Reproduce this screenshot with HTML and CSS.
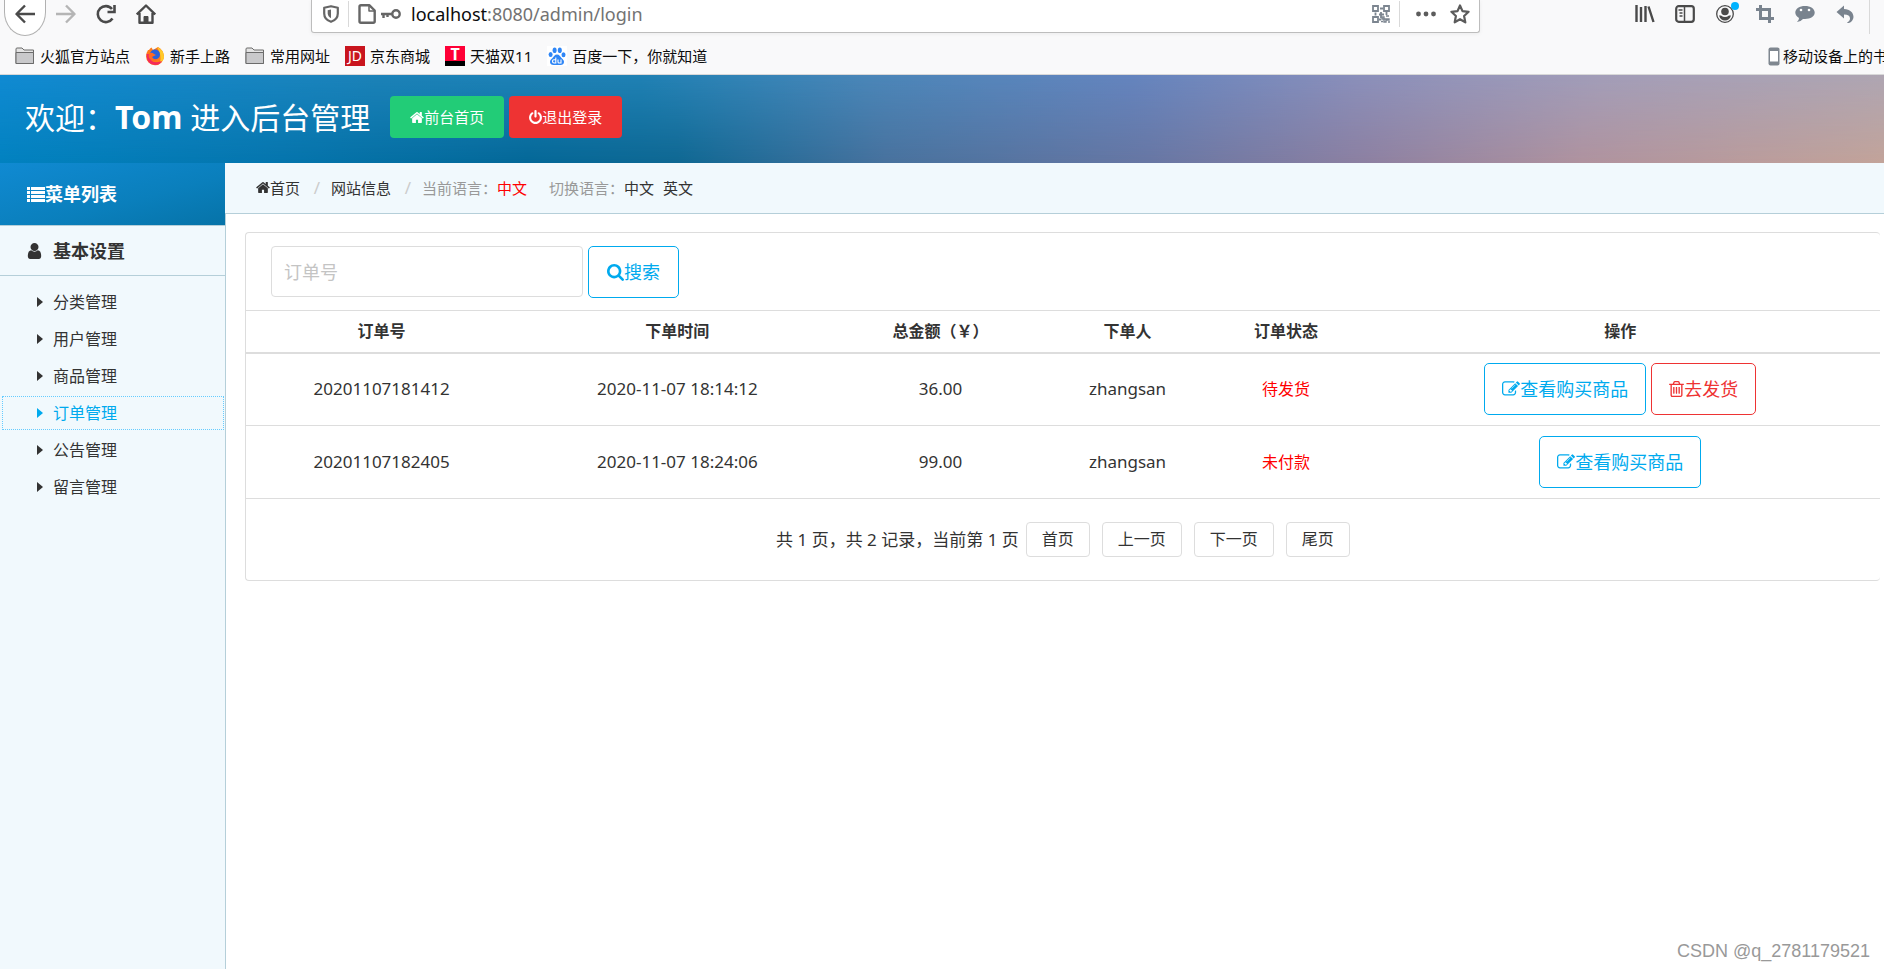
FILE: index.html
```html
<!DOCTYPE html>
<html lang="zh-CN">
<head>
<meta charset="utf-8">
<title>后台管理</title>
<link rel="stylesheet" href="styles.css">
</head>
<body>
<svg class="defs" aria-hidden="true">
  <symbol id="home" viewBox="64 128 1664 1536"><path d="M1472 992v480q0 26-19 45t-45 19h-384v-384h-256v384h-384q-26 0-45-19t-19-45v-480q0-1 .5-3t.5-3l575-474 575 474q1 2 1 6zm223-69l-62 74q-8 9-21 11h-3q-13 0-21-7l-692-577-692 577q-12 8-24 7-13-2-21-11l-62-74q-8-10-7-23.500t11-21.500l719-599q32-26 76-26t76 26l244 204v-195q0-14 9-23t23-9h192q14 0 23 9t9 23v408l219 182q10 8 11 21.500t-7 23.500z"/></symbol>
  <symbol id="power" viewBox="128 0 1536 1664"><path d="M1664 896q0 156-61 298t-164 245-245 164-298 61-298-61-245-164-164-245-61-298q0-182 80.500-343t226.500-270q43-32 95.500-25t83.500 50q32 42 24.500 94.500t-49.500 84.500q-98 74-151.500 181t-53.500 228q0 104 40.500 198.500t109.500 163.500 163.500 109.500 198.500 40.500 198.500-40.500 163.500-109.500 109.500-163.500 40.500-198.500q0-121-53.500-228t-151.500-181q-42-32-49.500-84.500t24.500-94.500q31-43 84-50t95 25q146 109 226.500 270t80.500 343zm-640-768v640q0 52-38 90t-90 38-90-38-38-90v-640q0-52 38-90t90-38 90 38 38 90z"/></symbol>
  <symbol id="user" viewBox="256 128 1280 1536"><path d="M1536 1399q0 109-62.500 187t-150.500 78h-854q-88 0-150.500-78t-62.500-187q0-85 8.500-160.500t31.500-152 58.500-131 94-89 134.500-34.500q131 128 313 128t313-128q76 0 134.500 34.500t94 89 58.500 131 31.500 152 8.500 160.500zm-256-887q0 159-112.500 271.500t-271.500 112.500-271.500-112.500-112.500-271.500 112.500-271.500 271.500-112.500 271.500 112.500 112.500 271.500z"/></symbol>
  <symbol id="search" viewBox="64 128 1664 1664"><path d="M1216 832q0-185-131.500-316.500t-316.500-131.500-316.500 131.500-131.500 316.500 131.500 316.500 316.500 131.500 316.500-131.500 131.500-316.500zm512 832q0 52-38 90t-90 38q-54 0-90-38l-343-342q-179 124-399 124-143 0-273.500-55.500t-225-150-150-225-55.500-273.500 55.500-273.500 150-225 225-150 273.500-55.500 273.500 55.500 225 150 150 225 55.500 273.500q0 220-124 399l343 343q37 37 37 90z"/></symbol>
  <symbol id="edit" viewBox="0 128 1792 1536"><path d="M888 1184l116-116-152-152-116 116v56h96v96h56zm440-720q-16-16-33 1l-350 350q-17 17-1 33t33-1l350-350q17-17 1-33zm80 594v190q0 119-84.500 203.500t-203.500 84.500h-832q-119 0-203.500-84.500t-84.500-203.500v-832q0-119 84.500-203.500t203.500-84.500h832q63 0 117 25 15 7 18 23 3 17-9 29l-49 49q-14 14-32 8-23-6-45-6h-832q-66 0-113 47t-47 113v832q0 66 47 113t113 47h832q66 0 113-47t47-113v-126q0-13 9-22l64-64q15-15 35-7t20 29zm-96-738l288 288-672 672h-288v-288zm444 132l-92 92-288-288 92-92q28-28 68-28t68 28l152 152q28 28 28 68t-28 68z"/></symbol>
  <symbol id="trash" viewBox="192 128 1408 1536"><path d="M704 736v576q0 14-9 23t-23 9h-64q-14 0-23-9t-9-23v-576q0-14 9-23t23-9h64q14 0 23 9t9 23zm256 0v576q0 14-9 23t-23 9h-64q-14 0-23-9t-9-23v-576q0-14 9-23t23-9h64q14 0 23 9t9 23zm256 0v576q0 14-9 23t-23 9h-64q-14 0-23-9t-9-23v-576q0-14 9-23t23-9h64q14 0 23 9t9 23zm128 724v-948h-896v948q0 22 7 40.500t14.500 27 10.500 8.500h832q3 0 10.500-8.500t14.500-27 7-40.500zm-672-1076h448l-48-117q-7-9-17-11h-317q-10 2-17 11zm928 32v64q0 14-9 23t-23 9h-96v948q0 83-47 143.500t-113 60.500h-832q-66 0-113-58.500t-47-141.500v-952h-96q-14 0-23-9t-9-23v-64q0-14 9-23t23-9h309l70-167q15-37 54-63t79-26h320q40 0 79 26t54 63l70 167h309q14 0 23 9t9 23z"/></symbol>
  <symbol id="caret" viewBox="0 0 6 10"><path d="M0 0l6 5-6 5z"/></symbol>
  <symbol id="folder" viewBox="0 0 20 20"><path d="M1 3q0-1 1-1h5l2 2h9.500v13.500H1z" fill="#e4e4e4" stroke="#6b6b6b"/><path d="M1 6.500h17.500v11H1z" fill="#c9c9cb" stroke="#6b6b6b"/></symbol>
</svg>

<div class="browser">
  <div class="toolbar">
    <div class="nav">
      <button class="tool back" aria-label="后退"><svg width="20" height="20" viewBox="0 0 20 20" fill="none" stroke="#4a4a4a" stroke-width="2.400"><path d="M20 10H2M10 1.500L1.500 10l8.500 8.500" stroke-linejoin="round"/></svg></button>
      <button class="tool" aria-label="前进"><svg width="20" height="20" viewBox="0 0 20 20" fill="none" stroke="#b5b5b5" stroke-width="2.400"><path d="M0 10h18M10 1.500l8.500 8.500-8.500 8.500" stroke-linejoin="round"/></svg></button>
      <button class="tool" aria-label="刷新"><svg width="20" height="20" viewBox="0 0 20 20" fill="none" stroke="#4a4a4a" stroke-width="2.600"><path d="M16.500 14.500A8 8 0 1 1 16 5"/><path d="M18.500 1v7h-7" /></svg></button>
      <button class="tool" aria-label="主页"><svg width="20" height="20" viewBox="0 0 20 20" fill="none" stroke="#4a4a4a" stroke-width="2.400"><path d="M.8 10.500L10 1.500l9.200 9M3.500 9v9.700h13V9" stroke-linejoin="round"/><path d="M8 19v-6.500h4V19" fill="#4a4a4a" stroke-width="1"/></svg></button>
    </div>
    <div class="address">
      <svg width="16" height="18" viewBox="0 0 16 18"><path d="M8 1.200l6.800 1.600v5.700c0 4-3 7-6.800 8.300-3.800-1.300-6.800-4.300-6.800-8.300V2.800z" fill="none" stroke="#666" stroke-width="2.200" stroke-linejoin="round"/><path d="M8 4.500v8.800C6 12.200 4.700 10.500 4.700 8.300V5.200z" fill="#666"/></svg>
      <span class="rule"></span>
      <svg class="page" width="18" height="20" viewBox="0 0 18 20" fill="none" stroke="#666" stroke-width="2.400" stroke-linejoin="round"><path d="M3 1.300h8.500L16.700 6.500v10.700q0 1.500-1.500 1.500H3q-1.500 0-1.500-1.500V2.800Q1.500 1.300 3 1.300z"/><path d="M11 2v5h5.500" stroke-width="1.500"/></svg>
      <svg class="key" width="20" height="12" viewBox="0 0 20 12" fill="none" stroke="#666" stroke-width="2.400"><circle cx="15" cy="6" r="3.700"/><path d="M0 6h11M2.500 6v4M6.500 6v3"/></svg>
      <span class="url"><b>localhost</b>:8080/admin/login</span>
      <svg class="qr" width="18" height="18" viewBox="0 0 18 18" fill="none" stroke="#7c8590" stroke-width="1.800"><path d="M1 1h5v5H1zM12 1h5v5h-5zM1 12h5v5H1zM8 3.500h3M3.500 7.500v3M14.500 7v3M7 14.500h2M9 7v6M7 9.500h5"/><path d="M10 12h2v2h-2zM12 14h2v3h-2zM14 11h3M15 14h2v1h-2zM9 16.500h2M16 17h2" stroke-width="1.400"/></svg>
      <span class="rule"></span>
      <button class="tool dots" aria-label="更多"><svg width="20" height="6" viewBox="0 0 20 6" fill="#5c5c5c"><circle cx="2.500" cy="3" r="2.400"/><circle cx="10" cy="3" r="2.400"/><circle cx="17.500" cy="3" r="2.400"/></svg></button>
      <button class="tool star" aria-label="收藏"><svg width="20" height="20" viewBox="0 0 20 20" fill="none" stroke="#5c5c5c" stroke-width="2.200" stroke-linejoin="round"><path d="M10 1.500l2.500 5.600 6.100.7-4.500 4.200 1.200 6.300L10 15.200l-5.300 3.100L5.900 12 1.400 7.800l6.100-.7z"/></svg></button>
    </div>
    <div class="extras">
      <button class="tool" aria-label="书库"><svg width="20" height="20" viewBox="0 0 20 20" stroke="#4a4a4a" stroke-width="2.400" fill="none"><path d="M1.500 1v17M6 3v15M10.500 2v16M13.500 2.500L18.500 18"/></svg></button>
      <button class="tool" aria-label="侧栏"><svg width="20" height="20" viewBox="0 0 20 20" fill="none" stroke="#4a4a4a" stroke-width="2.200"><rect x="1.200" y="2.200" width="17.600" height="15.600" rx="2.500"/><path d="M9.500 2v16" stroke-width="1.500"/><path d="M3.500 6h4M4.500 9h3M4.500 12h3" stroke-width="1.300"/></svg></button>
      <button class="tool" aria-label="账户"><svg width="20" height="20" viewBox="0 0 20 20"><circle cx="10" cy="10" r="8.300" fill="none" stroke="#4a4a4a" stroke-width="1.300"/><circle cx="10" cy="7.500" r="3.800" fill="#4a4a4a"/><path d="M4 11.500h2q4 3 8 0h2q-1.500 5-6 5t-6-5z" fill="#4a4a4a"/></svg><span class="dot"></span></button>
      <button class="tool" aria-label="截图"><svg width="20" height="20" viewBox="0 0 20 20" fill="none" stroke="#79838e" stroke-width="3"><path d="M1 5.500h13.500V19M5.500 1v13.500H19"/></svg></button>
      <button class="tool" aria-label="聊天"><svg width="20" height="20" viewBox="0 0 20 20"><path d="M10 2c5.500 0 9.700 2.600 9.700 6.600S15.500 15 10 15q-1 0-2 0-2.500 3-6 3 2-1.500 2-4Q.3 12 .3 8.600C.3 4.600 4.500 2 10 2z" fill="#79838e"/><circle cx="6" cy="6" r="1.300" fill="#fff"/><circle cx="14" cy="6" r="1.300" fill="#fff"/></svg></button>
      <button class="tool" aria-label="撤销"><svg width="20" height="20" viewBox="0 0 20 20" fill="#79838e"><path d="M1.500 8L9 1.500V5c6 .3 9.500 3.500 9.500 8 0 2.500-2 5-4 5.800q-2 .5-2.500 0c2-1.300 3-2.500 3-4.300 0-2.500-2-4-6-4v4z"/></svg></button>
      <span class="rule"></span>
    </div>
  </div>
  <nav class="bookmarks">
    <a href="#"><svg width="20" height="20"><use href="#folder"/></svg>火狐官方站点</a>
    <a href="#"><svg width="20" height="20" viewBox="0 0 20 20"><path d="M4 4q1-2 2.500-2.500L8 4l5-3q5 2.500 6 9a9 9 0 0 1-18 .5Q1 7 3 4z" fill="#ff7a1a"/><path d="M12 1q7 3 7 9.500 0 4-4 6.500 2-8-3-16z" fill="#ffc928"/><path d="M1.500 8q0 11 8.500 11 5 0 7-4-8 3-11-1L5 8z" fill="#f42a5c"/><circle cx="10" cy="8.500" r="5" fill="#2b62d9"/><path d="M4 7.500q3-1.500 5 .5l2 1-4 2q2 3.500 6 2-4 4-8 0-2-2-1-5.500z" fill="#ff6a22"/></svg>新手上路</a>
    <a href="#"><svg width="20" height="20"><use href="#folder"/></svg>常用网址</a>
    <a href="#"><span class="site jd">JD</span>京东商城</a>
    <a href="#"><span class="site tmall">T</span>天猫双11</a>
    <a href="#"><svg class="white" width="20" height="20" viewBox="0 0 20 20" fill="#2f86f6"><ellipse cx="3.600" cy="8.500" rx="2" ry="2.600"/><ellipse cx="7.600" cy="4.300" rx="2" ry="2.800"/><ellipse cx="12.800" cy="4.300" rx="2" ry="2.800"/><ellipse cx="16.500" cy="8.800" rx="2" ry="2.500"/><path d="M10 8.500c2.500 0 3 2 4.500 3.500s2.500 2.300 2.500 4c0 2-1.500 3-3.500 3h-7C4.500 19 3 18 3 16s1-2.500 2.500-4S7.500 8.500 10 8.500z"/><path d="M8.800 11.500V17H7q-1.500 0-1.500-1.700T7 13.700h1.800M11 13.500v2.500q0 1 1 1h2v-3.500" fill="none" stroke="#fff" stroke-width="1.100"/></svg>百度一下，你就知道</a>
    <a class="mobile" href="#"><svg width="12" height="19" viewBox="0 0 12 19"><rect x=".5" y=".5" width="11" height="18" rx="2" fill="#7f8790"/><rect x="2" y="4" width="8" height="10.500" fill="#fff"/></svg>移动设备上的书</a>
  </nav>
</div>

<header class="banner">
  <h1 class="welcome">欢迎：<strong>Tom</strong> 进入后台管理</h1>
  <a class="pill green" href="#"><svg width="14" height="13"><use href="#home"/></svg>前台首页</a>
  <a class="pill red" href="#"><svg width="13" height="14"><use href="#power"/></svg>退出登录</a>
</header>

<div class="layout">
  <aside class="sidebar">
    <h2 class="menu-title"><svg width="18" height="15" viewBox="0 0 18 15" fill="#fff"><path d="M0 0h3v3H0zM0 4h3v3H0zM0 8h3v3H0zM0 12h3v3H0zM4 0h14v3H4zM4 4h14v3H4zM4 8h14v3H4zM4 12h14v3H4z"/></svg>菜单列表</h2>
    <h3 class="group"><svg width="15" height="16"><use href="#user"/></svg>基本设置</h3>
    <ul class="menu">
      <li><a href="#"><svg width="6" height="10"><use href="#caret"/></svg>分类管理</a></li>
      <li><a href="#"><svg width="6" height="10"><use href="#caret"/></svg>用户管理</a></li>
      <li><a href="#"><svg width="6" height="10"><use href="#caret"/></svg>商品管理</a></li>
      <li><a class="active" href="#"><svg width="6" height="10"><use href="#caret"/></svg>订单管理</a></li>
      <li><a href="#"><svg width="6" height="10"><use href="#caret"/></svg>公告管理</a></li>
      <li><a href="#"><svg width="6" height="10"><use href="#caret"/></svg>留言管理</a></li>
    </ul>
  </aside>

  <main class="main">
    <nav class="crumbs">
      <a href="#"><svg width="14" height="13"><use href="#home"/></svg>首页</a>
      <span class="slash">/</span>
      <a href="#">网站信息</a>
      <span class="slash">/</span>
      <span>当前语言：<em>中文</em></span>
      <span class="switch">切换语言：<a href="#">中文</a></span>
      <a class="lang" href="#">英文</a>
    </nav>
    <div class="content">
      <section class="panel">
        <form class="search">
          <input type="text" placeholder="订单号" aria-label="订单号">
          <button class="btn" type="button"><svg width="17" height="17"><use href="#search"/></svg>搜索</button>
        </form>
        <table class="orders">
          <colgroup><col class="c1"><col class="c2"><col class="c3"><col class="c4"><col class="c5"><col></colgroup>
          <thead>
            <tr><th>订单号</th><th>下单时间</th><th>总金额（￥）</th><th>下单人</th><th>订单状态</th><th>操作</th></tr>
          </thead>
          <tbody>
            <tr>
              <td>20201107181412</td><td>2020-11-07 18:14:12</td><td>36.00</td><td>zhangsan</td><td class="status">待发货</td>
              <td><div class="actions"><a class="btn" href="#"><svg width="18" height="16"><use href="#edit"/></svg>查看购买商品</a><a class="btn danger" href="#"><svg width="15" height="16"><use href="#trash"/></svg>去发货</a></div></td>
            </tr>
            <tr>
              <td>20201107182405</td><td>2020-11-07 18:24:06</td><td>99.00</td><td>zhangsan</td><td class="status">未付款</td>
              <td><div class="actions"><a class="btn" href="#"><svg width="18" height="16"><use href="#edit"/></svg>查看购买商品</a></div></td>
            </tr>
          </tbody>
        </table>
        <div class="pager">
          <span>共 1 页，共 2 记录，当前第 1 页</span>
          <a href="#">首页</a><a href="#">上一页</a><a href="#">下一页</a><a href="#">尾页</a>
        </div>
      </section>
    </div>
  </main>
</div>
<div class="watermark">CSDN @q_2781179521</div>
</body>
</html>
```
FILE: styles.css
```css
* { box-sizing: border-box; }

body {
  margin: 0;
  height: 100vh;
  display: flex;
  flex-direction: column;
  overflow: hidden;
  background: #fff;
  color: #333;
  font: 16px/24px "Noto Sans", "Noto Sans CJK SC", sans-serif;
}

a { color: inherit; text-decoration: none; }
svg { flex: none; }
svg:not([fill]) { fill: currentColor; }
.defs { position: absolute; width: 0; height: 0; }

/* Browser bars */
.browser {
  flex: none;
  background: #f9f9fa;
  border-bottom: 1px solid #d8d8d8;
  color: #0c0c0d;
}
.toolbar { display: flex; height: 40px; align-items: flex-start; }
.tool {
  position: relative;
  display: flex;
  align-items: center;
  justify-content: center;
  width: 38px;
  height: 28px;
  padding: 0;
  border: 0;
  background: none;
}
.nav { display: flex; gap: 2px; width: 311px; padding-left: 4px; }
.back {
  width: 42px;
  height: 36px;
  margin-right: -1px;
  padding-bottom: 8px;
  border: 1px solid #b1b1b1;
  border-top: 0;
  border-radius: 0 0 21px 21px / 0 0 24px 24px;
  background: #fff;
}
.address {
  flex: 1;
  display: flex;
  align-items: center;
  height: 33px;
  padding: 0 2px 5px 11px;
  border: 1px solid #bdbdbd;
  border-top: 0;
  border-radius: 0 0 3px 3px;
  background: #fff;
  box-shadow: 0 1px 4px rgba(0, 0, 0, .06);
}
.rule { width: 1px; height: 26px; background: #d9d9d9; }
.address .rule { margin: 0 9px; }
.key { margin: 0 10px 0 5px; }
.url { flex: 1; font-size: 18px; color: #737373; }
.url b { font-weight: normal; color: #0c0c0d; }
.dots { width: 34px; }
.star { width: 34px; }
.extras { display: flex; gap: 2px; width: 404px; padding-left: 146px; }
.extras .rule { height: 34px; margin-left: 3px; }
.dot {
  position: absolute;
  top: 2px;
  right: 5px;
  width: 8px;
  height: 8px;
  border-radius: 50%;
  background: #00b3ff;
}
.bookmarks {
  display: flex;
  gap: 15px;
  height: 34px;
  padding: 0 0 2px 15px;
  font-size: 15px;
  white-space: nowrap;
}
.bookmarks a { display: flex; align-items: center; gap: 5px; }
.bookmarks .mobile { width: 116px; margin-left: auto; gap: 3px; overflow: hidden; }
.white { background: #fff; }
.site {
  width: 20px;
  height: 20px;
  color: #fff;
  text-align: center;
  line-height: 20px;
}
.jd { background: #c9151e; font-size: 14px; }
.tmall {
  background: linear-gradient(#ff0036 75%, #000 75%);
  font-size: 16px;
  font-weight: bold;
  line-height: 16px;
}

/* Page banner */
.banner {
  position: relative;
  flex: none;
  display: flex;
  align-items: center;
  height: 88px;
  padding: 0 25px 4px;
  gap: 5px;
  color: #fff;
  background: linear-gradient(90deg, #0282c0, #0575ad 15%, #046898 28%, #0f6893 36%, #48729e 47%, #6877a4 61%, #8c80a2 72%, #b0939f 84%, #c3a49a);
}
.banner::before {
  content: "";
  position: absolute;
  inset: 0;
  background: linear-gradient(90deg, #108ad2, #1c82b8 20%, #2081b4 34%, #4a86b8 46%, #6484be 60%, #8a8fba 72%, #a29db8 85%, #aea5b2);
  mask-image: linear-gradient(#000, transparent);
}
.banner > * { position: relative; }
.welcome { margin: 0 15px 0 0; font-size: 30px; font-weight: normal; line-height: 40px; }
.welcome strong { font-size: 32px; }
.pill {
  display: flex;
  align-items: center;
  justify-content: center;
  height: 42px;
  padding: 0 20px;
  border-radius: 4px;
  font-size: 15px;
}
.green { background: #2c7; }
.red { background: #e33; }

/* Layout */
.layout { flex: 1; display: flex; min-height: 0; }
.sidebar { width: 225px; background: #f1f9fd; }
.menu-title, .group {
  display: flex;
  align-items: center;
  margin: 0;
  padding-left: 27px;
  border-bottom: 1px solid #b5cfd9;
  font-size: 18px;
}
.menu-title {
  height: 63px;
  color: #fff;
  background: linear-gradient(165deg, #108ad2, #0a7fbc 60%, #0673a8);
}
.group { height: 50px; gap: 11px; }
.menu {
  display: flex;
  flex-direction: column;
  gap: 3px;
  margin: 0;
  padding: 9px 1px 0 2px;
  list-style: none;
}
.menu a {
  display: flex;
  align-items: center;
  gap: 10px;
  height: 34px;
  padding-left: 34px;
  border: 1px solid transparent;
}
.menu .active { color: #0ae; border: 1px dotted #6cf; }

.main { flex: 1; display: flex; flex-direction: column; min-width: 0; }
.crumbs {
  display: flex;
  align-items: center;
  height: 51px;
  padding-left: 31px;
  border-bottom: 1px solid #b5cfd9;
  background: #f1f9fd;
  color: #999;
  font-size: 15px;
}
.crumbs a { color: #333; }
.crumbs em { color: #f00; font-style: normal; }
.slash { width: 31px; padding-left: 3px; text-align: center; color: #ccc; font-size: 17px; }
.switch { margin-left: 22px; }
.lang { margin-left: 9px; }
.content {
  flex: 1;
  padding: 18px 4px 0 19px;
  border-left: 1px solid #b5cfd9;
}
.panel {
  border: 1px solid #ddd;
  border-right: 0;
  border-radius: 4px;
}

/* Search and buttons */
.search { display: flex; align-items: flex-start; gap: 5px; padding: 13px 25px 12px; }
.search input {
  width: 312px;
  height: 51px;
  padding: 0 12px;
  border: 1px solid #ddd;
  border-radius: 4px;
  font: inherit;
  font-size: 18px;
}
.search input::placeholder { color: #c4c4c4; }
.btn {
  display: flex;
  align-items: center;
  height: 52px;
  padding: 0 17px;
  border: 1px solid #0ae;
  border-radius: 5px;
  background: #fff;
  color: #0ae;
  font: inherit;
  font-size: 18px;
}
.search .btn { padding: 0 18px; }
.danger { border-color: #e33; color: #e33; }

/* Orders */
.orders { width: 100%; border-collapse: collapse; table-layout: fixed; text-align: center; }
.c1 { width: 16.6%; }
.c2 { width: 19.6%; }
.c3 { width: 12.6%; }
.c4 { width: 10.3%; }
.c5 { width: 9.1%; }
.orders th { height: 42px; padding: 0; border-top: 1px solid #ddd; border-bottom: 2px solid #ddd; }
.orders td { height: 73px; padding: 0; border-bottom: 1px solid #ddd; font-size: 17px; }
.orders .status { color: #f00; font-size: 16px; }
.actions { display: flex; justify-content: center; gap: 5px; }

.pager { display: flex; justify-content: center; align-items: center; gap: 12px; padding: 23px 0; }
.pager span { margin-right: -5px; font-size: 17px; }
.pager a { padding: 4px 15px 5px; border: 1px solid #ddd; border-radius: 4px; }

.watermark {
  position: absolute;
  right: 14px;
  bottom: 6px;
  color: #999;
  font: 18px/24px "Liberation Sans", sans-serif;
}
```
